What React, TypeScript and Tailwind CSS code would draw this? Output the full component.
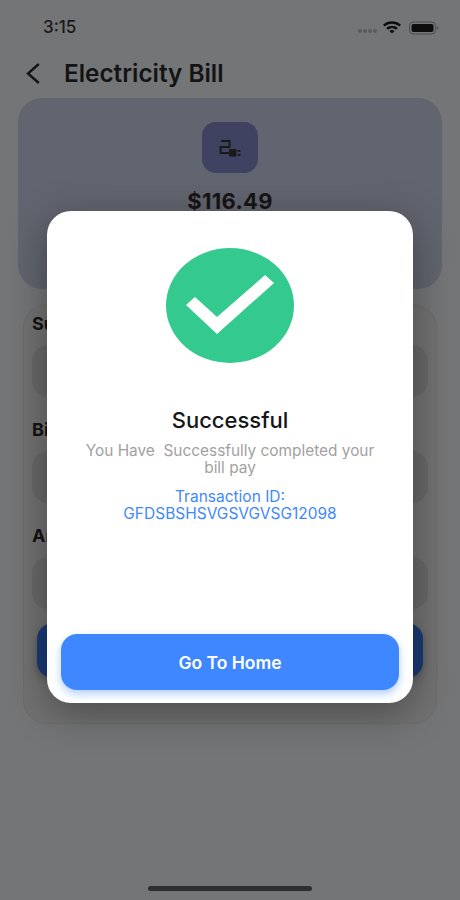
const font = { fontFamily: 'Inter, "Liberation Sans", sans-serif' };

function Field({ label }: { label: string }) {
  return (
    <div className="flex flex-col">
      <div className="h-[24px] text-[18px] leading-[24px] font-bold text-[#141414]">{label}</div>
      <div className="mt-[9px] h-[52px] rounded-[16px] bg-[#696969]" />
    </div>
  );
}

export default function App() {
  return (
    <div style={font} className="relative flex h-[900px] w-[460px] flex-col overflow-hidden bg-[#747577]">
      <div className="flex h-[44px] shrink-0 items-end justify-between pl-[43px] pr-[21px] pb-[6px]">
        <span className="text-[17px] leading-[22px] font-medium text-[#1a1a1a]">3:15</span>
        <div className="flex items-center pb-[3px]">
          <div className="mt-[6px] mr-[5px] flex gap-[1px]">
            <span className="h-[4px] w-[4px] rounded-full bg-[#5c5c5c]" />
            <span className="h-[4px] w-[4px] rounded-full bg-[#5c5c5c]" />
            <span className="h-[4px] w-[4px] rounded-full bg-[#5c5c5c]" />
            <span className="h-[4px] w-[4px] rounded-full bg-[#5c5c5c]" />
          </div>
          <svg width="20" height="14" viewBox="0 0 20 14" className="mr-[7px] mb-[1px]">
            <path d="M1 4.6 C6 0 14 0 19 4.6 L17.3 6.4 C13 2.8 7 2.8 2.7 6.4Z" fill="#0d0d0d" />
            <path d="M4.2 7.9 C7.5 5 12.5 5 15.8 7.9 L14 9.7 C11.6 7.8 8.4 7.8 6 9.7Z" fill="#0d0d0d" />
            <path d="M7.4 11 C9 9.8 11 9.8 12.6 11 L10 13.6Z" fill="#0d0d0d" />
          </svg>
          <svg width="30" height="14" viewBox="0 0 30 14">
            <rect x="0.5" y="1" width="26" height="12" rx="3.5" fill="none" stroke="#4d4d4d" />
            <rect x="2.5" y="3" width="22" height="8" rx="2" fill="#0d0d0d" />
            <rect x="28" y="5.500" width="1.200" height="3" rx="0.6" fill="#4d4d4d" />
          </svg>
        </div>
      </div>

      <div className="flex h-[54px] shrink-0 items-center pt-[4px] pl-[26px]">
        <svg width="14" height="21" viewBox="0 0 14 21" fill="none" stroke="#141414" strokeWidth="2.4">
          <path d="M12.8 1 L2 10.5 L12.8 20" />
        </svg>
        <h1 className="ml-[24px] text-[24.3px] leading-[30px] font-semibold text-[#141414]">Electricity Bill</h1>
      </div>

      <div className="mx-[18px] flex h-[191px] shrink-0 flex-col items-center rounded-[24px] bg-[#62646f] pt-[24px]">
        <div className="flex h-[51px] w-[56px] items-center justify-center rounded-[14px] bg-[#3f4361]">
          <svg width="22" height="18" viewBox="0 0 22 18" fill="none">
            <path d="M2 2 H10.500 V8 H1.500 V14 H10" stroke="#1a1a1a" strokeWidth="2" />
            <rect x="10" y="10" width="7.500" height="7.500" rx="1" fill="#1a1a1a" />
            <rect x="18.500" y="11" width="3" height="1.800" fill="#1a1a1a" />
            <rect x="18.500" y="15" width="3" height="1.800" fill="#1a1a1a" />
          </svg>
        </div>
        <div className="mt-[14px] text-[22px] leading-[28px] font-bold tracking-[0.3px] text-[#161616]">$116.49</div>
      </div>

      <div className="mx-[23px] mt-[15px] flex h-[420px] shrink-0 flex-col rounded-[24px] border border-[#6d6d6d] bg-[#727272] px-[8px] pt-[7px]">
        <div className="flex flex-col gap-[21px]">
          <Field label="Subscriber ID" />
          <Field label="Bill Number" />
          <Field label="Amount" />
        </div>
        <div className="mx-[5px] mt-[14px] h-[55px] rounded-[16px] bg-[#1a3a75] shadow-[0_4px_8px_rgba(0,0,0,0.25)]" />
      </div>

      <div className="absolute top-[886px] left-[148px] h-[5px] w-[164px] rounded-full bg-[#2f2f2f]" />

      <div className="absolute top-[211px] left-[47px] flex h-[492px] w-[366px] flex-col items-center rounded-[24px] bg-white px-[14px] pt-[37px] pb-[13px] shadow-[0_10px_40px_rgba(0,0,0,0.35)]">
        <svg width="128" height="115" viewBox="0 0 128 115" className="shrink-0">
          <ellipse cx="64" cy="57.500" rx="64" ry="57.500" fill="#34ca8f" />
          <polygon points="99,27 108,35 51,86 20,57 29,49 51,69" fill="#ffffff" />
        </svg>
        <h2 className="mt-[43px] text-[22px] leading-[28px] font-medium text-[#161616]">Successful</h2>
        <p className="mt-[8px] w-[300px] text-center text-[15.4px] leading-[17px] whitespace-pre-wrap text-[#a1a1a1]">
          {"You Have  Successfully completed your bill pay"}
        </p>
        <p className="mt-[13px] w-[300px] text-center text-[15.5px] leading-[16.500px] text-[#3f87ff]">
          Transaction ID: GFDSBSHSVGSVGVSG12098
        </p>
        <button className="mt-auto h-[56px] w-full rounded-[16px] bg-[#3f87ff] pt-[3px] text-[17.5px] font-semibold text-white shadow-[0_4px_8px_rgba(63,135,255,0.4)]">
          Go To Home
        </button>
      </div>
    </div>
  );
}
